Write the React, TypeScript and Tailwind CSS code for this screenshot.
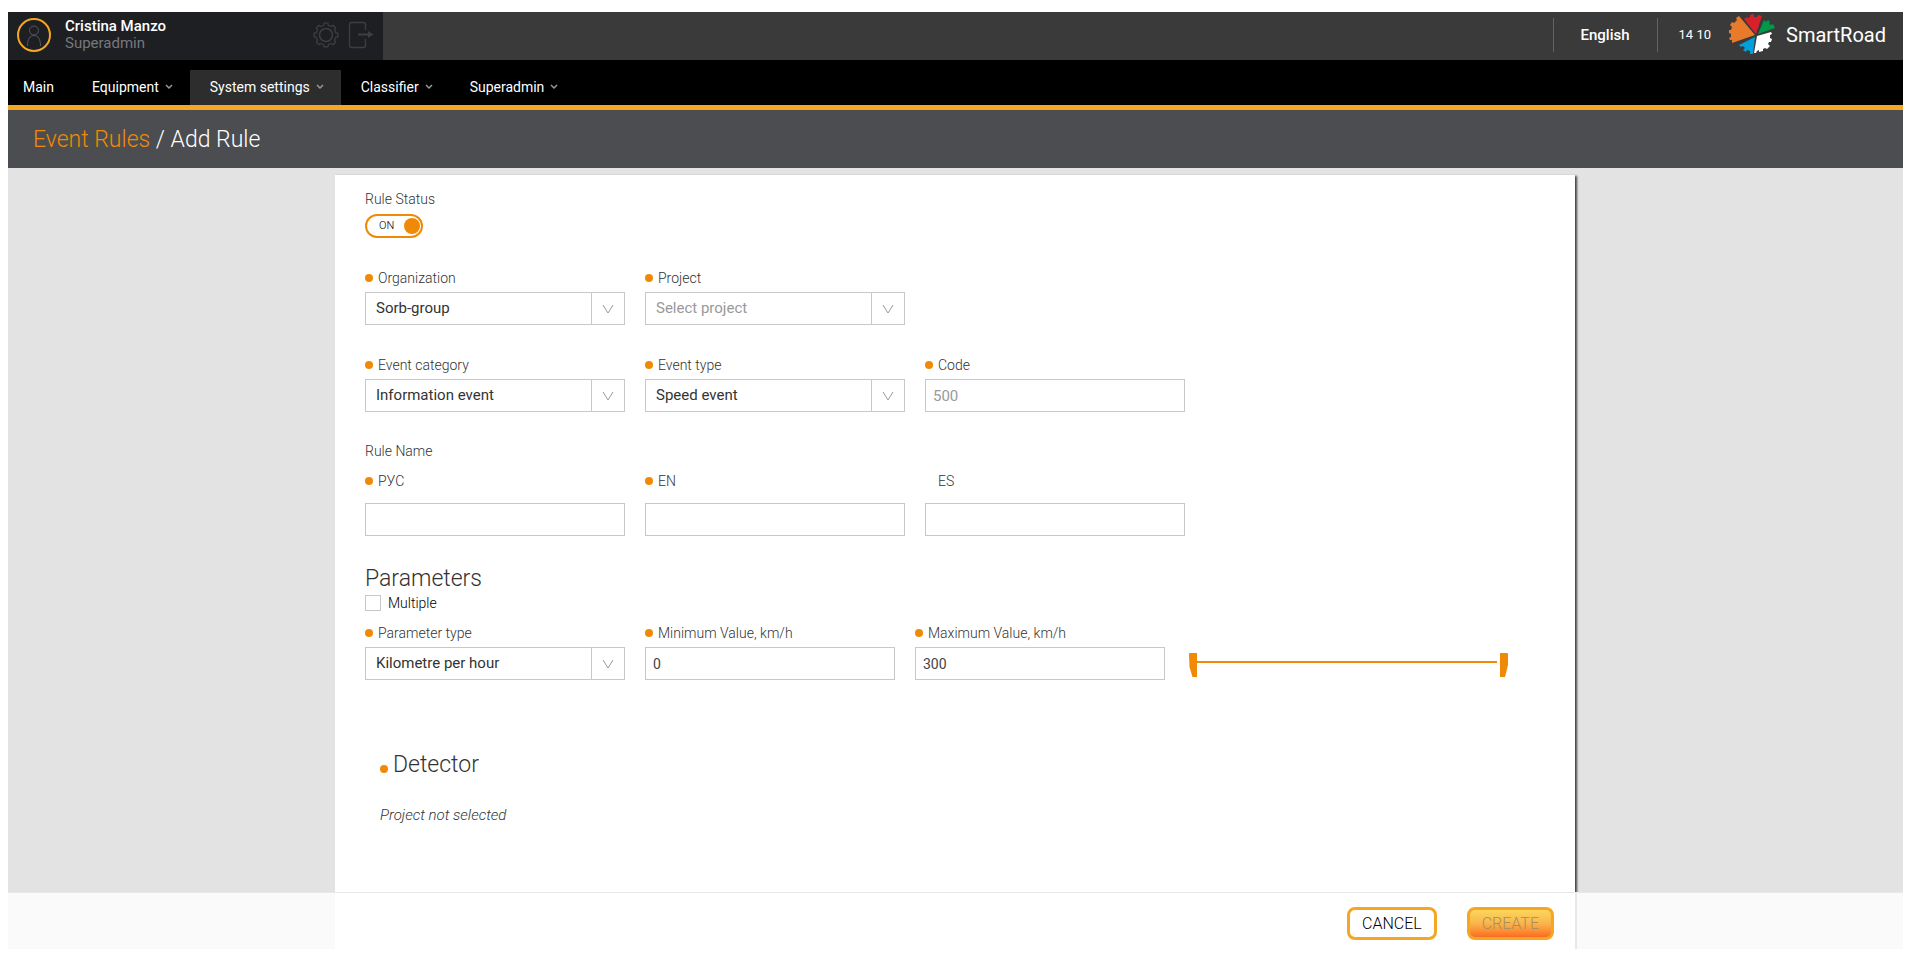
import { useId, useState } from "react";

const navItems = [
  { label: "Main", hasMenu: false },
  { label: "Equipment", hasMenu: true },
  { label: "System settings", hasMenu: true, active: true },
  { label: "Classifier", hasMenu: true },
  { label: "Superadmin", hasMenu: true },
];

// Sectors of the gear logo, all drawn around the hub at 27,22
const sectors = [
  { color: "#e87a2c", d: "M26 21L10 2L7 4L8 6L5 9L3 8L1 11L3 13L2 16L0 16V19L2 20V23L0 24L1 26L3 26V29Z" },
  { color: "#d8202a", d: "M27 20L15 5L18 3L19 4L21 3V1L25 0V3L28 3L29 1L33 2Z" },
  { color: "#00994a", d: "M29 20L35 6L37 8L39 6L41 8L40 10L42 11L44 10L46 14Z" },
  { color: "#ffffff", d: "M28 22L42 18L43 20L41 21V24L43 25L42 28L40 28L39 30L41 32L38 35L36 34L34 35V37L30 38L30 36L28 37L27 39H25Z" },
  { color: "#00a0dc", d: "M26 23L24 40L21 40V37L18 36L17 38L14 36L16 34L14 32L12 33L10 31Z" },
];

function Logo() {
  return (
    <svg width="47" height="42" viewBox="0 0 47 42" aria-hidden="true">
      {sectors.map((s) => (
        <path key={s.color} d={s.d} fill={s.color} />
      ))}
    </svg>
  );
}

function GearIcon() {
  const points: string[] = [];
  for (let i = 0; i < 8; i++) {
    [
      [-13, 10],
      [-9, 12],
      [9, 12],
      [13, 10],
    ].forEach(([offset, r]) => {
      const a = ((i * 45 + offset) * Math.PI) / 180;
      points.push(`${13 + Math.sin(a) * r},${13 - Math.cos(a) * r}`);
    });
  }
  return (
    <svg width="26" height="26" viewBox="0 0 26 26" fill="none" stroke="#3d3e40" strokeLinejoin="round">
      <polygon points={points.join(" ")} strokeWidth="1.3" />
      <circle cx="13" cy="13" r="6.5" strokeWidth="1.5" />
    </svg>
  );
}

function ExitIcon() {
  return (
    <svg width="26" height="28" viewBox="0 0 26 28" fill="none" stroke="#3d3e40" strokeWidth="1.3">
      <path d="M17.500 9V3.500Q17.500 1.500 15.500 1.500H3.500Q1.500 1.500 1.500 3.500V24.500Q1.500 26.500 3.500 26.500H15.500Q17.500 26.500 17.500 24.500V18" />
      <path d="M10 13.500H21" strokeWidth="2" />
      <path d="M20 10L25.500 13.500L20 17Z" fill="#3d3e40" stroke="none" />
    </svg>
  );
}

function Dot() {
  return <span className="h-2 w-2 shrink-0 rounded-full bg-[#f08a06]" />;
}

type FieldProps = {
  label: string;
  required?: boolean;
  wide?: boolean;
};

function FieldLabel({ id, label, required = true, wide }: FieldProps & { id: string }) {
  return (
    <label
      htmlFor={id}
      className={`flex items-center gap-[5px] text-sm leading-5 font-light text-[#333] ${wide ? "mb-3" : "mb-1"}`}
    >
      {required ? <Dot /> : <span className="w-2" />}
      {label}
    </label>
  );
}

function SelectField({ label, value, empty }: FieldProps & { value: string; empty?: boolean }) {
  const id = useId();
  return (
    <div className="w-[260px]">
      <FieldLabel id={id} label={label} />
      <div className="relative">
        <select
          id={id}
          className={`h-[33px] w-full appearance-none border border-[#c8c8c8] bg-white pr-9 pl-[10px] text-[15px] outline-none ${
            empty ? "text-[#999]" : "text-[#333]"
          }`}
        >
          <option>{value}</option>
        </select>
        <span className="pointer-events-none absolute inset-y-0 right-0 flex w-[34px] items-center justify-center border-l border-[#c8c8c8] pr-[2px]">
          <svg width="12" height="10" viewBox="0 0 12 10" fill="none" stroke="#999">
            <path d="M1 1L6 9L11 1" />
          </svg>
        </span>
      </div>
    </div>
  );
}

function TextField({
  label,
  required,
  wide,
  value = "",
  muted,
  className = "w-[260px]",
}: FieldProps & { value?: string; muted?: boolean; className?: string }) {
  const id = useId();
  return (
    <div className={className}>
      <FieldLabel id={id} label={label} required={required} wide={wide} />
      <input
        id={id}
        type="text"
        defaultValue={value}
        className={`block h-[33px] w-full border border-[#c8c8c8] bg-white px-[7px] outline-none ${
          muted ? "text-[15px] text-[#999]" : "text-sm text-[#444]"
        }`}
      />
    </div>
  );
}

function Header() {
  return (
    <header className="flex h-12 bg-[#393a39] text-white">
      <div className="flex w-[375px] items-center bg-[#1e1f23] pr-[9px] pb-[2px] pl-[9px]">
        <svg width="34" height="34" viewBox="0 0 34 34" fill="none">
          <circle cx="17" cy="17" r="16" stroke="#f5a623" strokeWidth="2" />
          <circle cx="17" cy="12.500" r="4.500" stroke="#57585a" />
          <path d="M10.500 28C10.500 21 13 17.500 17 17.500S23.500 21 23.500 28" stroke="#57585a" />
        </svg>
        <div className="ml-[14px] flex-1 text-[15px] leading-[17px]">
          <div className="font-medium">Cristina Manzo</div>
          <div className="text-[#77787a]">Superadmin</div>
        </div>
        <button type="button" aria-label="Settings" className="mr-[9px]">
          <GearIcon />
        </button>
        <button type="button" aria-label="Log out">
          <ExitIcon />
        </button>
      </div>
      <div className="ml-auto flex items-center pb-[2px]">
        <button
          type="button"
          className="flex h-[34px] w-[105px] items-center justify-center border-x border-[#626362] text-[15px] font-medium"
        >
          English
        </button>
        <span className="ml-[21px] text-[13px]">14 10</span>
        <a href="#" className="mr-[17px] ml-[18px] flex items-center gap-[10px] text-xl">
          <Logo />
          SmartRoad
        </a>
      </div>
    </header>
  );
}

function NavBar() {
  return (
    <nav className="flex h-[50px] items-end border-b-[5px] border-[#f5a623] bg-black">
      {navItems.map((item) => (
        <a
          key={item.label}
          href="#"
          className={`flex h-[35px] items-center gap-[6px] pb-px text-sm text-white ${
            item.hasMenu ? "pr-[17px] pl-5" : "pr-[18px] pl-[15px]"
          } ${item.active ? "bg-[#2d2d2d]" : ""}`}
        >
          {item.label}
          {item.hasMenu && (
            <svg width="8" height="6" viewBox="0 0 8 6" fill="none" stroke="#999" strokeWidth="1.5">
              <path d="M1 1L4 4L7 1" />
            </svg>
          )}
        </a>
      ))}
    </nav>
  );
}

export default function App() {
  const [enabled, setEnabled] = useState(true);

  return (
    <div className="bg-white px-2 py-3 font-['Roboto',sans-serif]">
      <Header />
      <NavBar />
      <h1 className="flex h-[58px] items-center bg-[#4c4d51] pt-[2px] pl-[25px] text-[23px] font-light text-white">
        <a href="#" className="text-[#f08a06]">
          Event Rules
        </a>
        <span className="whitespace-pre"> / Add Rule</span>
      </h1>

      <form className="bg-[#e3e3e3]" onSubmit={(e) => e.preventDefault()}>
        <div className="pt-[7px] pr-px">
          <div className="mx-auto h-[717px] max-w-[1240px] bg-white px-[30px] pt-[14px] shadow-[2px_1px_2px_#444]">
            <div className="text-sm leading-5 font-light text-[#333]">Rule Status</div>
            <label className="mt-[5px] flex h-6 w-[58px] cursor-pointer items-center justify-between rounded-full border-2 border-[#f08a06] pr-px pl-3 text-[11px] font-light">
              {enabled ? "ON" : "OFF"}
              <input
                type="checkbox"
                aria-label="Rule status"
                checked={enabled}
                onChange={() => setEnabled(!enabled)}
                className="h-4 w-4 appearance-none rounded-full bg-[#f08a06]"
              />
            </label>

            <div className="mt-[30px] flex gap-5">
              <SelectField label="Organization" value="Sorb-group" />
              <SelectField label="Project" value="Select project" empty />
            </div>

            <div className="mt-[30px] flex gap-5">
              <SelectField label="Event category" value="Information event" />
              <SelectField label="Event type" value="Speed event" />
              <TextField label="Code" value="500" muted />
            </div>

            <div className="mt-[29px] mb-[10px] text-sm leading-5 font-light text-[#333]">Rule Name</div>
            <div className="flex gap-5">
              <TextField label="РУС" wide />
              <TextField label="EN" wide />
              <TextField label="ES" wide required={false} />
            </div>

            <h2 className="mt-[29px] text-[23px] leading-7 font-light text-[#333]">Parameters</h2>
            <label className="flex items-center gap-[7px] text-sm leading-5 font-light text-black">
              <input type="checkbox" className="h-4 w-4 appearance-none border border-[#c8c8c8] bg-white" />
              Multiple
            </label>
            <div className="mt-[10px] flex gap-5">
              <SelectField label="Parameter type" value="Kilometre per hour" />
              <TextField label="Minimum Value, km/h" value="0" className="w-[250px]" />
              <TextField label="Maximum Value, km/h" value="300" className="w-[250px]" />
              <svg width="328" height="24" viewBox="0 0 328 24" fill="#f08a06" className="mt-[30px] ml-1">
                <path d="M0 1Q0 0 1 0H8V24H3.500L0.500 14Z" />
                <rect x="8" y="8" width="300" height="2" />
                <path d="M311 0H318Q319 0 319 1V12L316 24H311Z" />
              </svg>
            </div>

            <div className="mt-[71px] pl-[15px] text-[#333]">
              <h2 className="flex items-center gap-[5px] text-[23px] leading-7 font-light">
                <span className="mt-2 flex">
                  <Dot />
                </span>
                Detector
              </h2>
              <p className="mt-6 text-[15px] leading-6 font-light italic">Project not selected</p>
            </div>
          </div>
        </div>

        <footer className="relative border-t border-[#e8e8e8] bg-[#fafafa] pr-px">
          <div className="mx-auto flex h-14 max-w-[1240px] items-center justify-end gap-[30px] bg-white pt-[5px] pr-[21px] shadow-[2px_0_0_#e8e8e8]">
            <button
              type="button"
              className="h-[33px] rounded-lg border-3 border-[#f5a623] bg-white px-3 text-base font-light text-black"
            >
              CANCEL
            </button>
            <button
              type="submit"
              disabled
              className="h-[33px] rounded-lg border-3 border-[#f5a623] bg-linear-to-b from-[#fbd65c] via-[#f9b54a] to-[#fb6a1e] px-3 text-base font-light text-[#a98d62]"
            >
              CREATE
            </button>
          </div>
        </footer>
      </form>
    </div>
  );
}
